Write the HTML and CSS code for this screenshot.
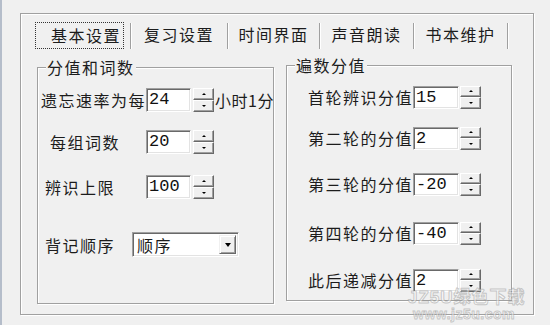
FILE: index.html
```html
<!DOCTYPE html>
<html lang="zh">
<head>
<meta charset="utf-8">
<title>基本设置</title>
<link rel="stylesheet" href="styles.css">
</head>
<body>
<div class="panel">
  <div class="tabs">
    <div class="tab active">基本设置</div>
    <div class="sep"></div>
    <div class="tab t2">复习设置</div>
    <div class="sep"></div>
    <div class="tab t3">时间界面</div>
    <div class="sep"></div>
    <div class="tab t4">声音朗读</div>
    <div class="sep"></div>
    <div class="tab t5">书本维护</div>
    <div class="sep"></div>
  </div>
  <div class="groups">
    <div class="group g-left">
      <div class="gtitle">分值和词数</div>
      <div class="row lr1">
        <span class="lab lp3">遗忘速率为每</span>
        <div class="inp">24</div>
        <div class="spin"><span class="sb up"><i></i></span><span class="sb dn"><i></i></span></div>
        <span class="suf">小时1分</span>
      </div>
      <div class="row lr2">
        <span class="lab lp12">每组词数</span>
        <div class="inp">20</div>
        <div class="spin"><span class="sb up"><i></i></span><span class="sb dn"><i></i></span></div>
      </div>
      <div class="row lr3">
        <span class="lab lp7">辨识上限</span>
        <div class="inp">100</div>
        <div class="spin"><span class="sb up"><i></i></span><span class="sb dn"><i></i></span></div>
      </div>
      <div class="row lr4">
        <span class="lab lab-sel lp7">背记顺序</span>
        <div class="sel"><span class="sel-text">顺序</span><span class="dd"><i></i></span></div>
      </div>
    </div>
    <div class="group g-right">
      <div class="gtitle">遍数分值</div>
      <div class="row rr1">
        <span class="rlab">首轮辨识分值</span>
        <div class="inp rinp">15</div>
        <div class="spin rspin"><span class="sb up"><i></i></span><span class="sb dn"><i></i></span></div>
      </div>
      <div class="row rr2">
        <span class="rlab">第二轮的分值</span>
        <div class="inp rinp">2</div>
        <div class="spin rspin"><span class="sb up"><i></i></span><span class="sb dn"><i></i></span></div>
      </div>
      <div class="row rr3">
        <span class="rlab">第三轮的分值</span>
        <div class="inp rinp">-20</div>
        <div class="spin rspin"><span class="sb up"><i></i></span><span class="sb dn"><i></i></span></div>
      </div>
      <div class="row rr4">
        <span class="rlab">第四轮的分值</span>
        <div class="inp rinp">-40</div>
        <div class="spin rspin"><span class="sb up"><i></i></span><span class="sb dn"><i></i></span></div>
      </div>
      <div class="row rr5">
        <span class="rlab">此后递减分值</span>
        <div class="inp rinp">2</div>
        <div class="spin rspin"><span class="sb up"><i></i></span><span class="sb dn"><i></i></span></div>
      </div>
    </div>
  </div>
</div>
<div class="wm">
  <div class="wm1">JZ5U绿色下载</div>
  <div class="wm2">www.jz5u.com</div>
</div>
</body>
</html>
```

FILE: styles.css
```css
* { box-sizing: border-box; }
html, body { margin: 0; }
body {
  width: 550px;
  height: 325px;
  padding: 13px 0 0 18px;
  background: #f0f0f0;
  border-left: 2px solid #b5bdca;
  font-family: "Noto Sans CJK SC", sans-serif;
  font-size: 16px;
  letter-spacing: 1.5px;
  color: #1c1c1c;
  position: relative;
  overflow: hidden;
}
.panel {
  width: 514px;
  height: 302px;
  border: 1px solid #a0a0a0;
  box-shadow: inset 1px 1px 0 #fff, 1px 1px 0 #fff;
}
.tabs {
  display: flex;
  align-items: center;
  height: 27px;
  margin: 8px 0 0 14px;
}
.tab {
  height: 27px;
  line-height: 25px;
  text-align: center;
  white-space: nowrap;
}
.tab.active {
  width: 89px;
  border: 1px dotted #333;
  padding-left: 13px;
  margin-right: 6px;
}
.t2 { width: 96px; }
.t3 { width: 91px; }
.t4 { width: 93px; }
.t5 { width: 93px; }
.sep {
  width: 1px;
  height: 26px;
  background: #a0a0a0;
  box-shadow: 1px 0 0 #fff;
  flex: none;
}
.groups {
  display: flex;
  align-items: flex-start;
  margin: 16px 0 0 16px;
}
.group {
  border: 1px solid #a0a0a0;
  box-shadow: inset 1px 1px 0 #fff, 1px 1px 0 #fff;
}
.g-left { width: 237px; height: 237px; margin-top: 2px; margin-right: 12px; }
.g-right { width: 226px; height: 236px; }
.gtitle {
  width: max-content;
  line-height: 20px;
  margin: -11px 0 0 8px;
  padding: 0 1px;
  background: #f0f0f0;
}
.row { display: flex; align-items: center; }
.lab { width: 108px; white-space: nowrap; flex: none; }
.lab-sel { width: 94px; }
.lp3 { padding-left: 3px; }
.lp7 { padding-left: 7px; }
.lp12 { padding-left: 12px; }
.lr1 { margin-top: 11px; }
.lr2 { margin-top: 18px; }
.lr3 { margin-top: 21px; }
.lr4 { margin-top: 33px; }
.inp {
  width: 45px;
  height: 24px;
  flex: none;
  background: #fff;
  border: 1px solid;
  border-color: #a0a0a0 #fff #fff #a0a0a0;
  box-shadow: inset 1px 1px 0 #696969, inset -1px -1px 0 #e3e3e3;
  font-family: "Liberation Mono", monospace;
  font-size: 17px;
  letter-spacing: 0;
  line-height: 22px;
  padding-left: 2px;
  color: #111;
}
.spin {
  width: 21px;
  height: 24px;
  margin-left: 2px;
  display: flex;
  flex-direction: column;
  flex: none;
}
.sb {
  flex: 1;
  background: #f0f0f0;
  border: 1px solid;
  border-color: #fff #696969 #696969 #fff;
  box-shadow: inset -1px -1px 0 #a0a0a0;
  display: flex;
  align-items: center;
  justify-content: center;
}
.sb i {
  display: block;
  width: 0;
  height: 0;
  border-left: 2px solid transparent;
  border-right: 2px solid transparent;
}
.up i { border-bottom: 2px solid #000; }
.dn i { border-top: 2px solid #000; }
.suf { margin-left: 1px; white-space: nowrap; letter-spacing: 0.5px; }
.sel {
  width: 107px;
  height: 25px;
  display: flex;
  align-items: center;
  background: #fff;
  border: 1px solid;
  border-color: #a0a0a0 #fff #fff #a0a0a0;
  box-shadow: inset 1px 1px 0 #696969, inset -1px -1px 0 #e3e3e3;
  padding: 2px 2px 2px 4px;
}
.sel-text { flex: 1; line-height: 20px; }
.dd {
  width: 17px;
  height: 19px;
  background: #f0f0f0;
  border: 1px solid;
  border-color: #f0f0f0 #696969 #696969 #f0f0f0;
  box-shadow: inset 1px 1px 0 #fff, inset -1px -1px 0 #a0a0a0;
  display: flex;
  align-items: center;
  justify-content: center;
}
.dd i {
  display: block;
  width: 0;
  height: 0;
  border-left: 3.5px solid transparent;
  border-right: 3.5px solid transparent;
  border-top: 4px solid #000;
}
.rlab { width: 126px; text-align: right; white-space: nowrap; flex: none; }
.rinp { width: 46px; height: 23px; line-height: 21px; }
.rspin { height: 23px; margin-left: 1px; }
.rr1 { margin-top: 10px; }
.rr2 { margin-top: 17px; }
.rr3 { margin-top: 22px; }
.rr4 { margin-top: 25px; }
.rr5 { margin-top: 23px; }
.wm {
  position: absolute;
  left: 406px;
  top: 290px;
  color: rgba(255, 255, 255, 0.55);
  -webkit-text-stroke: 1px rgba(140, 140, 140, 0.45);
  font-weight: bold;
  pointer-events: none;
}
.wm1 { font-size: 17px; line-height: 15px; letter-spacing: 1px; font-family: "Liberation Sans", "Noto Sans CJK SC", sans-serif; }
.wm2 { font-size: 14px; line-height: 15px; margin-top: 2px; letter-spacing: 0.5px; margin-left: 5px; font-family: "Liberation Sans", sans-serif; }
```
